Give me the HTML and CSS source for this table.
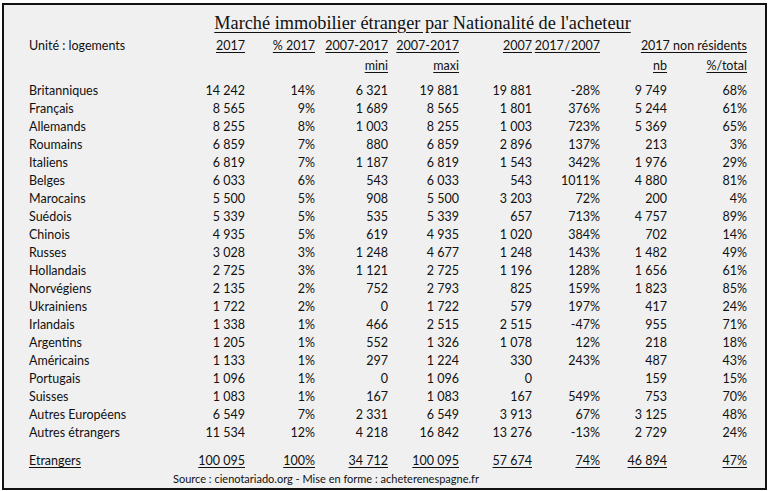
FILE: index.html
```html
<!DOCTYPE html>
<html lang="fr">
<head>
    <meta charset="UTF-8">
    <title>Marché immobilier étranger par Nationalité de l'acheteur</title>
    <link rel="stylesheet" href="styles.css">
</head>
<body>
    <div class="frame">
        <h1 class="title">Marché immobilier étranger par Nationalité de l'acheteur</h1>

        <table class="market">
            <colgroup>
                <col class="c-label">
                <col class="c-n1">
                <col class="c-n2">
                <col class="c-n3">
                <col class="c-n4">
                <col class="c-n5">
                <col class="c-n6">
                <col class="c-n7">
                <col class="c-n8">
            </colgroup>
            <thead>
                <tr class="head-main">
                    <th class="label">Unité : logements</th>
                    <th><u>2017</u></th>
                    <th><u>% 2017</u></th>
                    <th><u>2007-2017</u></th>
                    <th><u>2007-2017</u></th>
                    <th><u>2007</u></th>
                    <th><u>2017&#8202;/&#8202;2007</u></th>
                    <th colspan="2"><u>2017 non résidents</u></th>
                </tr>
                <tr class="head-sub">
                    <th></th>
                    <th></th>
                    <th></th>
                    <th><u>mini</u></th>
                    <th><u>maxi</u></th>
                    <th></th>
                    <th></th>
                    <th><u>nb</u></th>
                    <th><u>%/total</u></th>
                </tr>
            </thead>
            <tbody>
                <tr class="first"><td class="label">Britanniques</td><td>14 242</td><td>14%</td><td>6 321</td><td>19 881</td><td>19 881</td><td>-28%</td><td>9 749</td><td>68%</td></tr>
                <tr><td class="label">Français</td><td>8 565</td><td>9%</td><td>1 689</td><td>8 565</td><td>1 801</td><td>376%</td><td>5 244</td><td>61%</td></tr>
                <tr><td class="label">Allemands</td><td>8 255</td><td>8%</td><td>1 003</td><td>8 255</td><td>1 003</td><td>723%</td><td>5 369</td><td>65%</td></tr>
                <tr><td class="label">Roumains</td><td>6 859</td><td>7%</td><td>880</td><td>6 859</td><td>2 896</td><td>137%</td><td>213</td><td>3%</td></tr>
                <tr><td class="label">Italiens</td><td>6 819</td><td>7%</td><td>1 187</td><td>6 819</td><td>1 543</td><td>342%</td><td>1 976</td><td>29%</td></tr>
                <tr><td class="label">Belges</td><td>6 033</td><td>6%</td><td>543</td><td>6 033</td><td>543</td><td>1011%</td><td>4 880</td><td>81%</td></tr>
                <tr><td class="label">Marocains</td><td>5 500</td><td>5%</td><td>908</td><td>5 500</td><td>3 203</td><td>72%</td><td>200</td><td>4%</td></tr>
                <tr><td class="label">Suédois</td><td>5 339</td><td>5%</td><td>535</td><td>5 339</td><td>657</td><td>713%</td><td>4 757</td><td>89%</td></tr>
                <tr><td class="label">Chinois</td><td>4 935</td><td>5%</td><td>619</td><td>4 935</td><td>1 020</td><td>384%</td><td>702</td><td>14%</td></tr>
                <tr><td class="label">Russes</td><td>3 028</td><td>3%</td><td>1 248</td><td>4 677</td><td>1 248</td><td>143%</td><td>1 482</td><td>49%</td></tr>
                <tr><td class="label">Hollandais</td><td>2 725</td><td>3%</td><td>1 121</td><td>2 725</td><td>1 196</td><td>128%</td><td>1 656</td><td>61%</td></tr>
                <tr><td class="label">Norvégiens</td><td>2 135</td><td>2%</td><td>752</td><td>2 793</td><td>825</td><td>159%</td><td>1 823</td><td>85%</td></tr>
                <tr><td class="label">Ukrainiens</td><td>1 722</td><td>2%</td><td>0</td><td>1 722</td><td>579</td><td>197%</td><td>417</td><td>24%</td></tr>
                <tr><td class="label">Irlandais</td><td>1 338</td><td>1%</td><td>466</td><td>2 515</td><td>2 515</td><td>-47%</td><td>955</td><td>71%</td></tr>
                <tr><td class="label">Argentins</td><td>1 205</td><td>1%</td><td>552</td><td>1 326</td><td>1 078</td><td>12%</td><td>218</td><td>18%</td></tr>
                <tr><td class="label">Américains</td><td>1 133</td><td>1%</td><td>297</td><td>1 224</td><td>330</td><td>243%</td><td>487</td><td>43%</td></tr>
                <tr><td class="label">Portugais</td><td>1 096</td><td>1%</td><td>0</td><td>1 096</td><td>0</td><td></td><td>159</td><td>15%</td></tr>
                <tr><td class="label">Suisses</td><td>1 083</td><td>1%</td><td>167</td><td>1 083</td><td>167</td><td>549%</td><td>753</td><td>70%</td></tr>
                <tr><td class="label">Autres Européens</td><td>6 549</td><td>7%</td><td>2 331</td><td>6 549</td><td>3 913</td><td>67%</td><td>3 125</td><td>48%</td></tr>
                <tr><td class="label">Autres étrangers</td><td>11 534</td><td>12%</td><td>4 218</td><td>16 842</td><td>13 276</td><td>-13%</td><td>2 729</td><td>24%</td></tr>
            </tbody>
            <tfoot>
                <tr class="total">
                    <td class="label"><u>Etrangers</u></td>
                    <td><u>100 095</u></td>
                    <td><u>100%</u></td>
                    <td><u>34 712</u></td>
                    <td><u>100 095</u></td>
                    <td><u>57 674</u></td>
                    <td><u>74%</u></td>
                    <td><u>46 894</u></td>
                    <td><u>47%</u></td>
                </tr>
            </tfoot>
        </table>

        <p class="source">Source : cienotariado.org - Mise en forme : acheterenespagne.fr</p>
    </div>
</body>
</html>
```

FILE: styles.css
```css
* {
    margin: 0;
    padding: 0;
    box-sizing: border-box;
}

body {
    background: #fff;
    color: #111;
    font-family: Lato, "Open Sans", "Liberation Sans", sans-serif;
    font-size: 12.5px;
}

.frame {
    width: 765px;
    height: 487px;
    margin: 3px 0 0 2px;
    border: 2px solid #111;
    background: #f0f0f0;
    padding-top: 7px;
}

.title {
    font-family: "Liberation Serif", "DejaVu Serif", serif;
    font-weight: normal;
    font-size: 18.3px;
    line-height: 22px;
    text-align: center;
    text-decoration: underline;
    text-underline-offset: 3px;
    margin-left: 76px;
    margin-bottom: 2px;
}

.market {
    border-collapse: collapse;
    table-layout: fixed;
    width: 743px;
}

u {
    text-decoration: underline;
    text-underline-offset: 2px;
}

.c-label { width: 171px; }
.c-n1 { width: 70px; }
.c-n2 { width: 70px; }
.c-n3 { width: 73px; }
.c-n4 { width: 71px; }
.c-n5 { width: 73px; }
.c-n6 { width: 68px; }
.c-n7 { width: 67px; }
.c-n8 { width: 80px; }

th, td {
    padding: 0;
    text-align: right;
    white-space: nowrap;
    font-weight: normal;
}

.label {
    text-align: left;
    padding-left: 25px;
}

.head-main th,
.head-sub th {
    height: 20px;
    line-height: 20px;
}

tbody td {
    height: 18px;
    line-height: 18px;
}

tbody tr.first td {
    padding-top: 6px;
    height: 24px;
}

.total td {
    height: 28px;
    line-height: 18px;
    padding-top: 10px;
}

.source {
    font-size: 11px;
    line-height: 18px;
    margin-left: 169px;
}
```
